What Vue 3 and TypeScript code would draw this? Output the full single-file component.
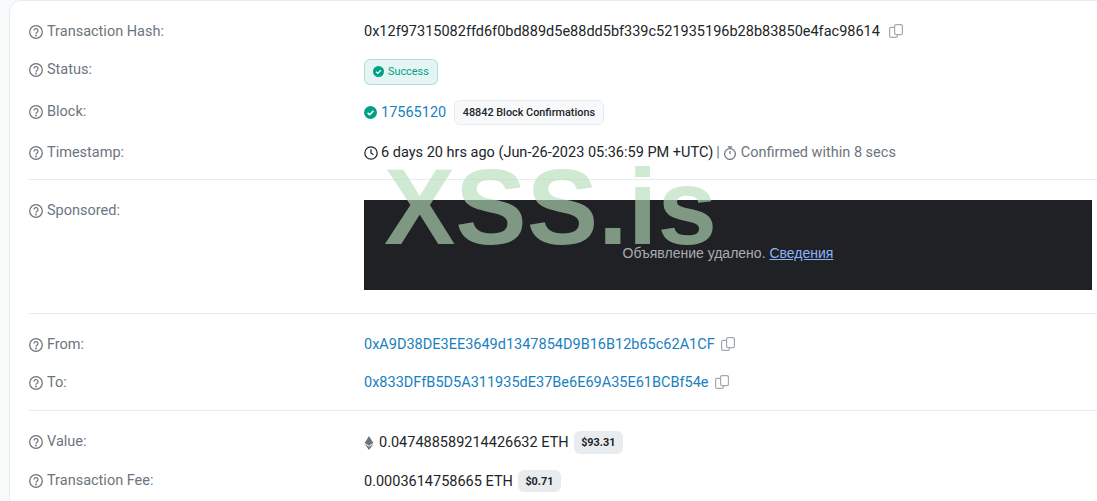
<script setup lang="ts">
const hash = '0x12f97315082ffd6f0bd889d5e88dd5bf339c521935196b28b83850e4fac98614'
const from = '0xA9D38DE3EE3649d1347854D9B16B12b65c62A1CF'
const to = '0x833DFfB5D5A311935dE37Be6E69A35E61BCBf54e'
</script>

<template>
  <div class="page">
    <main class="card">
      <section class="group first">
        <div class="row r-hash">
          <div class="label"><svg class="q" viewBox="0 0 14 14"><circle cx="7" cy="7" r="6.3"/><path d="M5 5.5a2 2 0 1 1 3.1 1.7c-.7.4-1.1.8-1.1 1.5"/><circle class="dot" cx="7" cy="10.5" r=".9"/></svg>Transaction Hash:</div>
          <div class="value"><span>{{ hash }}</span><svg class="copy c-hash" viewBox="0 0 14 14"><rect x="5.6" y="0.6" width="7.8" height="10" rx="1.4"/><path d="M5.6 3.4H2a1.4 1.4 0 0 0-1.4 1.4V12A1.4 1.4 0 0 0 2 13.4h5A1.4 1.4 0 0 0 8.4 12v-1.4"/></svg></div>
        </div>
        <div class="row r-status">
          <div class="label"><svg class="q" viewBox="0 0 14 14"><circle cx="7" cy="7" r="6.3"/><path d="M5 5.5a2 2 0 1 1 3.1 1.7c-.7.4-1.1.8-1.1 1.5"/><circle class="dot" cx="7" cy="10.5" r=".9"/></svg>Status:</div>
          <div class="value"><span class="success"><svg class="tick small" viewBox="0 0 14 14"><circle cx="7" cy="7" r="7"/><path d="M3.9 7.2l2.2 2.2 4-4.1"/></svg>Success</span></div>
        </div>
        <div class="row r-block">
          <div class="label"><svg class="q" viewBox="0 0 14 14"><circle cx="7" cy="7" r="6.3"/><path d="M5 5.5a2 2 0 1 1 3.1 1.7c-.7.4-1.1.8-1.1 1.5"/><circle class="dot" cx="7" cy="10.5" r=".9"/></svg>Block:</div>
          <div class="value"><svg class="tick" viewBox="0 0 14 14"><circle cx="7" cy="7" r="7"/><path d="M3.9 7.2l2.2 2.2 4-4.1"/></svg><a class="link">17565120</a><span class="confirm">48842 Block Confirmations</span></div>
        </div>
        <div class="row r-time">
          <div class="label"><svg class="q" viewBox="0 0 14 14"><circle cx="7" cy="7" r="6.3"/><path d="M5 5.5a2 2 0 1 1 3.1 1.7c-.7.4-1.1.8-1.1 1.5"/><circle class="dot" cx="7" cy="10.5" r=".9"/></svg>Timestamp:</div>
          <div class="value"><svg class="clock" viewBox="0 0 14 14"><circle cx="7" cy="7" r="6.2"/><path d="M7 3.3V7l2.5 1.7"/></svg><span>6 days 20 hrs ago (Jun-26-2023 05:36:59 PM +UTC)</span><span class="muted sep">|</span><svg class="timer" viewBox="0 0 14 14"><circle cx="7" cy="8" r="5.4"/><path d="M4.8 .8h4.4M7 .8v1.8M7 5V8"/></svg><span class="muted">Confirmed within 8 secs</span></div>
        </div>
      </section>

      <section class="group sponsored">
        <div class="row r-ad">
          <div class="label"><svg class="q" viewBox="0 0 14 14"><circle cx="7" cy="7" r="6.3"/><path d="M5 5.5a2 2 0 1 1 3.1 1.7c-.7.4-1.1.8-1.1 1.5"/><circle class="dot" cx="7" cy="10.5" r=".9"/></svg>Sponsored:</div>
          <div class="ad"><span>Объявление удалено.&nbsp;<a>Сведения</a></span></div>
        </div>
      </section>

      <section class="group parties">
        <div class="row r-from">
          <div class="label"><svg class="q" viewBox="0 0 14 14"><circle cx="7" cy="7" r="6.3"/><path d="M5 5.5a2 2 0 1 1 3.1 1.7c-.7.4-1.1.8-1.1 1.5"/><circle class="dot" cx="7" cy="10.5" r=".9"/></svg>From:</div>
          <div class="value"><a class="link">{{ from }}</a><svg class="copy" viewBox="0 0 14 14"><rect x="5.6" y="0.6" width="7.8" height="10" rx="1.4"/><path d="M5.6 3.4H2a1.4 1.4 0 0 0-1.4 1.4V12A1.4 1.4 0 0 0 2 13.4h5A1.4 1.4 0 0 0 8.4 12v-1.4"/></svg></div>
        </div>
        <div class="row r-to">
          <div class="label"><svg class="q" viewBox="0 0 14 14"><circle cx="7" cy="7" r="6.3"/><path d="M5 5.5a2 2 0 1 1 3.1 1.7c-.7.4-1.1.8-1.1 1.5"/><circle class="dot" cx="7" cy="10.5" r=".9"/></svg>To:</div>
          <div class="value"><a class="link">{{ to }}</a><svg class="copy" viewBox="0 0 14 14"><rect x="5.6" y="0.6" width="7.8" height="10" rx="1.4"/><path d="M5.6 3.4H2a1.4 1.4 0 0 0-1.4 1.4V12A1.4 1.4 0 0 0 2 13.4h5A1.4 1.4 0 0 0 8.4 12v-1.4"/></svg></div>
        </div>
      </section>

      <section class="group amounts">
        <div class="row r-val">
          <div class="label"><svg class="q" viewBox="0 0 14 14"><circle cx="7" cy="7" r="6.3"/><path d="M5 5.5a2 2 0 1 1 3.1 1.7c-.7.4-1.1.8-1.1 1.5"/><circle class="dot" cx="7" cy="10.5" r=".9"/></svg>Value:</div>
          <div class="value"><svg class="eth" viewBox="0 0 10 14"><path d="M5 0L.6 7.1 5 9.7l4.4-2.6z"/><path d="M.6 8.1L5 14l4.4-5.9L5 10.7z"/></svg><span>0.047488589214426632 ETH</span><span class="price">$93.31</span></div>
        </div>
        <div class="row r-fee">
          <div class="label"><svg class="q" viewBox="0 0 14 14"><circle cx="7" cy="7" r="6.3"/><path d="M5 5.5a2 2 0 1 1 3.1 1.7c-.7.4-1.1.8-1.1 1.5"/><circle class="dot" cx="7" cy="10.5" r=".9"/></svg>Transaction Fee:</div>
          <div class="value"><span>0.0003614758665 ETH</span><span class="price fee">$0.71</span></div>
        </div>
      </section>

      <div class="watermark">XSS.is</div>
    </main>
  </div>
</template>

<style scoped>
.page {
  width: 1097px;
  height: 501px;
  overflow: hidden;
  background: #f8f9fa;
  padding-left: 9px;
  box-sizing: border-box;
  font-family: Roboto, "Liberation Sans", sans-serif;
  font-size: 14.5px;
  line-height: 21px;
  color: #212529;
}
.card {
  position: relative;
  width: 1200px;
  height: 560px;
  box-sizing: border-box;
  background: #fff;
  border: 1px solid #e9ecef;
  border-radius: 12px;
  padding: 20px 0 0 19px;
}
.group { width: 1100px; }
.group + .group { border-top: 1px solid #e9ecef; }
.first { padding-bottom: 16px; }
.sponsored { padding: 20px 0 23px; }
.parties { padding: 20px 0 17px; }
.amounts { padding: 20px 0 0; }
.row {
  display: grid;
  grid-template-columns: 335px 1fr;
  align-items: start;
}
.r-status { margin-top: 17px; }
.r-block { margin-top: 15px; }
.r-time { margin-top: 16px; padding-top: 1px; }
.r-to { margin-top: 17px; }
.r-fee { margin-top: 16px; }
.label {
  display: flex;
  align-items: center;
  color: #6c757d;
}
.r-block .label { padding-top: 1px; }
.q {
  width: 14px;
  height: 14px;
  margin-right: 4px;
  flex: none;
  fill: none;
  stroke: #6c757d;
  stroke-width: 1.25;
}
.q .dot { fill: #6c757d; stroke: none; }
.value {
  display: flex;
  align-items: center;
  white-space: nowrap;
}
.link { color: #1a7fbf; }
.muted { color: #6c757d; }
.sep { margin: 0 3px; }
.copy {
  width: 14px;
  height: 14px;
  margin-left: 6px;
  margin-top: -2px;
  fill: none;
  stroke: #a3a9ae;
  stroke-width: 1.2;
}
.c-hash { margin-left: 9px; }
.success {
  display: inline-flex;
  align-items: center;
  height: 26px;
  box-sizing: border-box;
  padding: 0 8px 1px;
  border: 1px solid rgba(0, 161, 134, 0.25);
  border-radius: 6px;
  background: rgba(0, 161, 134, 0.1);
  color: #00a186;
  font-size: 10.875px;
  font-weight: 400;
}
.tick {
  width: 13px;
  height: 13px;
  margin-right: 4px;
  fill: none;
}
.tick circle { fill: #00a186; }
.tick path { stroke: #fff; stroke-width: 1.7; }
.tick.small { width: 11px; height: 11px; }
.confirm {
  display: inline-flex;
  align-items: center;
  height: 25px;
  box-sizing: border-box;
  margin-left: 8px;
  padding: 0 7.5px;
  border: 1px solid #e9ecef;
  border-radius: 6px;
  background: #f8f9fa;
  color: #212529;
  font-size: 10.875px;
  font-weight: 500;
}
.clock, .timer {
  width: 14px;
  height: 14px;
  margin-right: 3px;
  fill: none;
  stroke-width: 1.25;
}
.timer { margin-right: 4px; }
.clock { stroke: #212529; }
.timer { stroke: #6c757d; }
.ad {
  width: 728px;
  height: 90px;
  box-sizing: border-box;
  padding-top: 16px;
  display: flex;
  align-items: center;
  justify-content: center;
  background: #202124;
  color: #a8adb2;
  font-family: "Liberation Sans", Arial, sans-serif;
  font-size: 14px;
}
.ad a {
  color: #8ab4f8;
  text-decoration: underline;
}
.eth {
  width: 10px;
  height: 14px;
  margin-right: 5px;
  fill: #6c757d;
}
.price {
  display: inline-flex;
  align-items: center;
  height: 23px;
  margin-left: 5px;
  padding: 0 7.5px;
  border-radius: 6px;
  background: #e9ecef;
  font-size: 10.875px;
  font-weight: 700;
}
.price.fee { height: 22px; }
.watermark {
  position: absolute;
  left: 374px;
  top: 151px;
  font-family: "Liberation Sans", Arial, sans-serif;
  font-size: 107px;
  font-weight: 700;
  line-height: 110px;
  color: rgba(182, 220, 185, 0.64);
  pointer-events: none;
}
</style>
